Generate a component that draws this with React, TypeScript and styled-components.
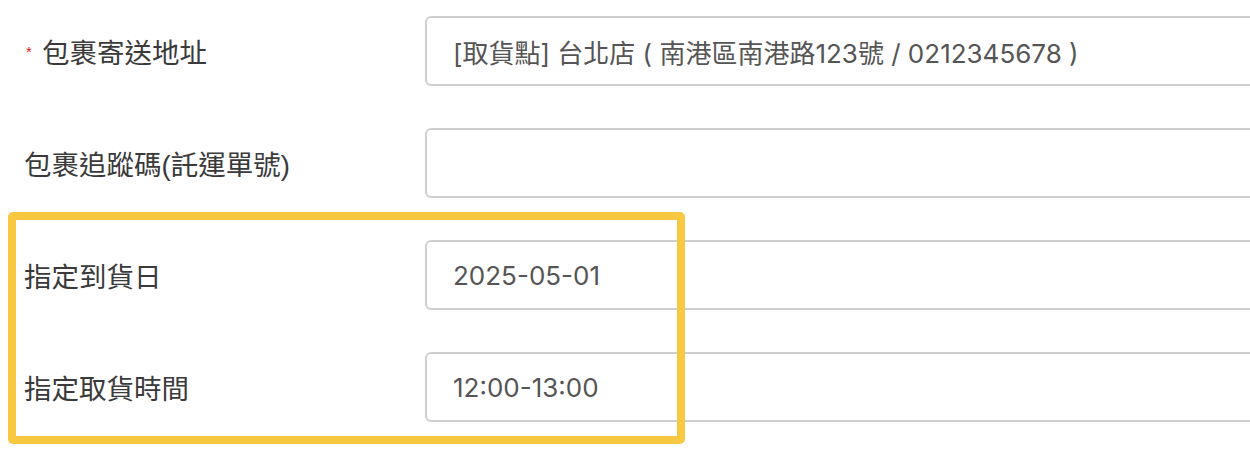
import React from 'react';
import styled, { createGlobalStyle } from 'styled-components';

const GlobalStyle = createGlobalStyle`
  html, body {
    margin: 0;
    padding: 0;
    background: #fff;
    overflow: hidden;
  }
  body {
    font-family: "Liberation Sans", "Noto Sans CJK TC", sans-serif;
  }
`;

const Form = styled.div`
  width: 1320px;
  padding-top: 16px;
`;

const Row = styled.div`
  display: flex;
  align-items: center;
  margin-bottom: 42px;
`;

const Label = styled.div`
  width: 425px;
  box-sizing: border-box;
  padding-left: 24px;
  font-size: 27.5px;
  color: #3a3a3a;
  display: flex;
  align-items: center;
`;

const Required = styled.span`
  color: #e0201b;
  font-size: 15px;
  width: 18px;
  padding-left: 2px;
  box-sizing: border-box;
`;

const Field = styled.div`
  flex: 1;
  height: 70px;
  box-sizing: border-box;
  border: 2px solid #cfcfcf;
  border-radius: 6px;
  padding: 0 26px;
  display: flex;
  align-items: center;
  font-family: Inter, "Noto Sans CJK TC", sans-serif;
  font-size: 26px;
  color: #555;
  white-space: nowrap;
`;

const Highlight = styled.div`
  position: relative;

  &::after {
    content: '';
    position: absolute;
    left: 8px;
    top: -28px;
    width: 677px;
    bottom: -22px;
    box-sizing: border-box;
    border: 8px solid #f8c842;
    border-radius: 5px;
    pointer-events: none;
  }
`;

type FieldRowProps = { label: string; value?: string; required?: boolean };

const FieldRow = ({ label, value, required }: FieldRowProps) => (
  <Row>
    <Label>
      {required && <Required>*</Required>}
      {label}
    </Label>
    <Field>{value}</Field>
  </Row>
);

const App = () => {
  return (
    <>
      <GlobalStyle />
      <Form>
        <FieldRow
          required
          label="包裹寄送地址"
          value="[取貨點] 台北店 ( 南港區南港路123號 / 0212345678 )"
        />
        <FieldRow label="包裹追蹤碼(託運單號)" />
        <Highlight>
          <FieldRow label="指定到貨日" value="2025-05-01" />
          <FieldRow label="指定取貨時間" value="12:00-13:00" />
        </Highlight>
      </Form>
    </>
  );
};

export default App;
